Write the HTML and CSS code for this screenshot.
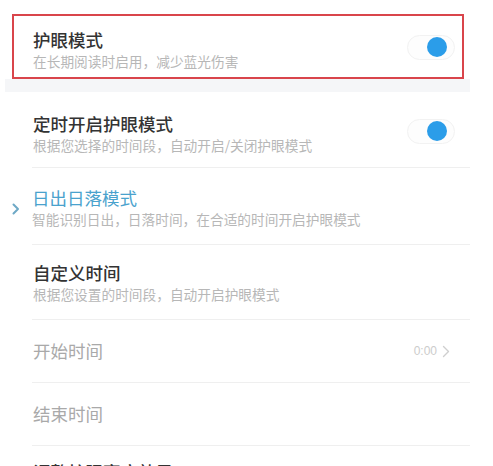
FILE: index.html
```html
<!DOCTYPE html>
<html lang="zh">
<head>
<meta charset="utf-8">
<link rel="stylesheet" href="styles.css">
</head>
<body>
<div class="page">
  <div class="highlight">
    <div class="row-main">
      <div class="text">
        <div class="title">护眼模式</div>
        <div class="sub">在长期阅读时启用，减少蓝光伤害</div>
      </div>
      <div class="toggle"><span class="knob"></span></div>
    </div>
  </div>
  <div class="band"></div>
  <div class="list">
    <div class="row r2">
      <div class="text">
        <div class="title">定时开启护眼模式</div>
        <div class="sub">根据您选择的时间段，自动开启/关闭护眼模式</div>
      </div>
      <div class="toggle t2"><span class="knob"></span></div>
    </div>
    <div class="row r3">
      <span class="marker"><svg width="8" height="12" viewBox="0 0 8 12"><polyline points="1.5,1.5 6,6 1.5,10.5" fill="none" stroke="#6ea9c6" stroke-width="2" stroke-linecap="round" stroke-linejoin="round"/></svg></span>
      <div class="text">
        <div class="title blue">日出日落模式</div>
        <div class="sub">智能识别日出，日落时间，在合适的时间开启护眼模式</div>
      </div>
    </div>
    <div class="row r4">
      <div class="text">
        <div class="title">自定义时间</div>
        <div class="sub">根据您设置的时间段，自动开启护眼模式</div>
      </div>
    </div>
    <div class="row plain">
      <div class="title muted">开始时间</div>
      <div class="value">0:00 <svg width="8" height="13" viewBox="0 0 8 13"><polyline points="1.5,1.5 6.5,6.5 1.5,11.5" fill="none" stroke="#cfcfcf" stroke-width="1.4" stroke-linecap="round" stroke-linejoin="round"/></svg></div>
    </div>
    <div class="row plain">
      <div class="title muted">结束时间</div>
    </div>
    <div class="row last">
      <div class="title">调整护眼亮度效果</div>
    </div>
  </div>
</div>
</body>
</html>
```

FILE: styles.css
```css
html, body {
  margin: 0;
  padding: 0;
  background: #ffffff;
}
body {
  font-family: "Noto Sans CJK SC", "Noto Sans", sans-serif;
  width: 493px;
  height: 466px;
  overflow: hidden;
}
.page {
  padding-top: 14px;
}
.highlight {
  margin: 0 29px 0 12px;
  border: 2px solid #d9454b;
  background: #ffffff;
}
.row-main {
  display: flex;
  align-items: center;
  justify-content: space-between;
  padding: 12px 7px 7px 19px;
}
.title {
  font-size: 17.5px;
  line-height: 24px;
  font-weight: 500;
  color: #333333;
}
.title.blue {
  color: #4aa2cd;
  font-weight: 400;
}
.title.muted {
  color: #a9a9a9;
  font-weight: 400;
}
.sub {
  font-size: 13.7px;
  line-height: 18px;
  color: #b7b7b7;
}
.toggle {
  width: 48px;
  height: 25px;
  border: 1px solid #f2f2f2;
  border-radius: 14px;
  background: #fdfdfd;
  display: flex;
  align-items: center;
  justify-content: flex-end;
  padding-right: 7px;
  box-sizing: border-box;
  margin-top: -4px;
}
.knob {
  width: 20px;
  height: 20px;
  border-radius: 50%;
  background: #2b9de9;
}
.band {
  margin: 0 23px 0 5px;
  height: 13px;
  background: #f5f6f8;
}
.list {
  margin: 0 23px 0 32px;
}
.row {
  display: flex;
  align-items: center;
  justify-content: space-between;
  border-bottom: 1px solid #efefef;
  box-sizing: border-box;
}
.r2 {
  padding: 20px 15px 13px 1px;
  height: 76px;
}
.r3 {
  justify-content: flex-start;
  padding: 17px 0 16px 0;
  height: 77px;
}
.marker {
  display: flex;
  width: 20px;
  margin-left: -20px;
  padding-top: 4px;
}
.r4 {
  padding: 16px 0 16px 1px;
  height: 75px;
}
.plain {
  height: 63px;
  padding: 0 20px 0 1px;
}
.value {
  display: flex;
  align-items: center;
  gap: 5px;
  font-size: 12px;
  color: #cccccc;
  font-family: "Liberation Sans", sans-serif;
}
.last {
  border-bottom: none;
  padding: 14px 0 0 1px;
}
```
